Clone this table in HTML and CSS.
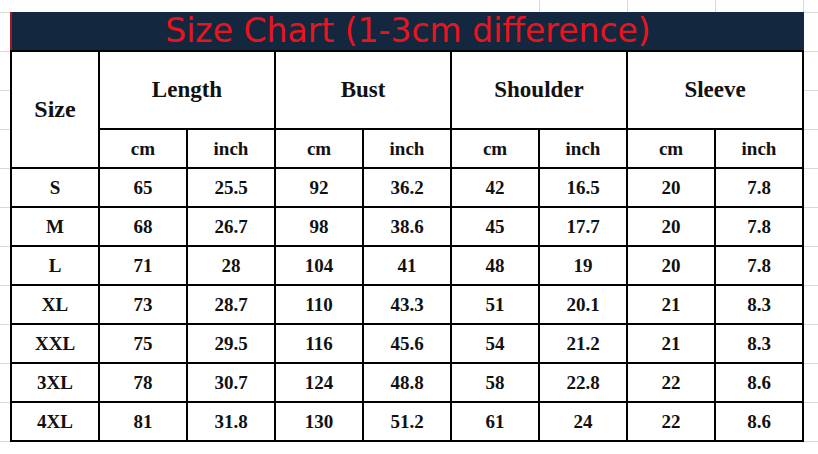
FILE: index.html
```html
<!DOCTYPE html>
<html>
<head>
<meta charset="utf-8">
<link rel="stylesheet" href="styles.css">
</head>
<body>
<div class="sheet">
  <div class="strip">
    <div class="strip-gap"></div>
    <div class="strip-cell"></div>
    <div class="strip-cell"></div>
    <div class="strip-cell"></div>
    <div class="strip-cell last"></div>
  </div>
  <div class="chart">
    <div class="title">Size Chart (1-3cm difference)</div>
    <table class="sizes">
      <colgroup>
        <col><col><col><col><col><col><col><col><col>
      </colgroup>
      <thead>
        <tr class="group-row">
          <th rowspan="2" class="size-head">Size</th>
          <th colspan="2">Length</th>
          <th colspan="2">Bust</th>
          <th colspan="2">Shoulder</th>
          <th colspan="2">Sleeve</th>
        </tr>
        <tr class="unit-row">
          <th>cm</th><th>inch</th>
          <th>cm</th><th>inch</th>
          <th>cm</th><th>inch</th>
          <th>cm</th><th>inch</th>
        </tr>
      </thead>
      <tbody>
        <tr><td>S</td><td>65</td><td>25.5</td><td>92</td><td>36.2</td><td>42</td><td>16.5</td><td>20</td><td>7.8</td></tr>
        <tr><td>M</td><td>68</td><td>26.7</td><td>98</td><td>38.6</td><td>45</td><td>17.7</td><td>20</td><td>7.8</td></tr>
        <tr><td>L</td><td>71</td><td>28</td><td>104</td><td>41</td><td>48</td><td>19</td><td>20</td><td>7.8</td></tr>
        <tr><td>XL</td><td>73</td><td>28.7</td><td>110</td><td>43.3</td><td>51</td><td>20.1</td><td>21</td><td>8.3</td></tr>
        <tr><td>XXL</td><td>75</td><td>29.5</td><td>116</td><td>45.6</td><td>54</td><td>21.2</td><td>21</td><td>8.3</td></tr>
        <tr><td>3XL</td><td>78</td><td>30.7</td><td>124</td><td>48.8</td><td>58</td><td>22.8</td><td>22</td><td>8.6</td></tr>
        <tr><td>4XL</td><td>81</td><td>31.8</td><td>130</td><td>51.2</td><td>61</td><td>24</td><td>22</td><td>8.6</td></tr>
      </tbody>
    </table>
  </div>
</div>
</body>
</html>
```
FILE: styles.css
```css
html, body {
  margin: 0;
  padding: 0;
}
body {
  width: 818px;
  height: 454px;
  overflow: hidden;
  background-color: #ffffff;
  background-image: linear-gradient(#d9d9d9 1px, transparent 1px);
  background-size: 100% 39px;
  background-position: 0 12px;
  background-repeat: repeat-y;
}
.sheet {
  padding-left: 10px;
}
.strip {
  display: flex;
  height: 12px;
}
.strip-gap {
  width: 529px;
}
.strip-cell {
  width: 88px;
  border-left: 1px solid #d9d9d9;
  box-sizing: border-box;
}
.strip-cell.last {
  width: 15px;
}
.chart {
  width: 794px;
  background: #fff;
}
.title {
  height: 38px;
  background: #13273f;
  border-left: 2px solid #a8161f;
  box-sizing: border-box;
  color: #e8141e;
  font-family: "DejaVu Sans", "Noto Sans", sans-serif;
  font-size: 33px;
  line-height: 38px;
  text-align: center;
  white-space: nowrap;
}
.sizes {
  border-collapse: collapse;
  table-layout: fixed;
  width: 794px;
  font-family: "Liberation Serif", "Times New Roman", serif;
  font-weight: bold;
  color: #111;
}
.sizes col {
  width: 88px;
}
.sizes th,
.sizes td {
  border: 2px solid #000;
  padding: 0;
  text-align: center;
  vertical-align: middle;
  font-weight: bold;
}
.sizes td {
  height: 37px;
  font-size: 19px;
}
.group-row th {
  height: 76px;
  font-size: 23px;
}
.group-row th.size-head {
  font-size: 24px;
}
.unit-row th {
  height: 37px;
  font-size: 19px;
}
```
